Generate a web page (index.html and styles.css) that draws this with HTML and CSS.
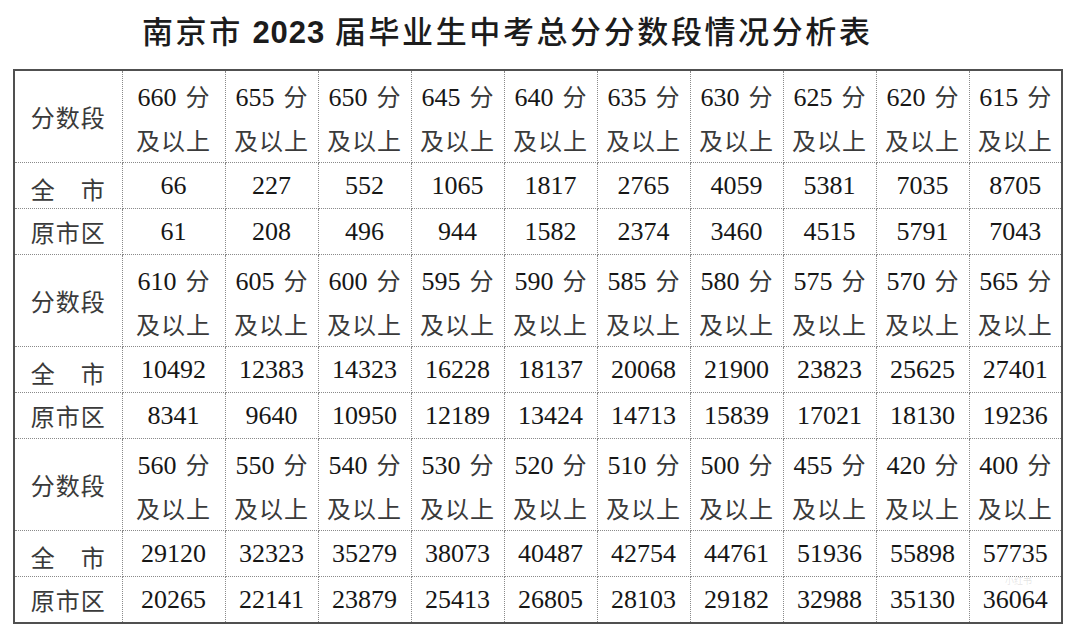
FILE: index.html
```html
<!DOCTYPE html>
<html lang="zh-CN">
<head>
<meta charset="utf-8">
<title>南京市2023届毕业生中考总分分数段情况分析表</title>
<link rel="stylesheet" href="styles.css">
</head>
<body>
<div class="page">
  <h1 class="title">南京市 <span class="num">2023</span> 届毕业生中考总分分数段情况分析表</h1>
  <table class="scores">
    <colgroup>
      <col class="c-label"><col class="c-first"><col class="c-n"><col class="c-n"><col class="c-n"><col class="c-n"><col class="c-n"><col class="c-n"><col class="c-n"><col class="c-n"><col class="c-n">
    </colgroup>
    <tbody>
      <tr class="head">
        <th class="label">分数段</th>
        <td><span class="l1">660<span class="u">分</span></span><span class="l2">及以上</span></td>
        <td><span class="l1">655<span class="u">分</span></span><span class="l2">及以上</span></td>
        <td><span class="l1">650<span class="u">分</span></span><span class="l2">及以上</span></td>
        <td><span class="l1">645<span class="u">分</span></span><span class="l2">及以上</span></td>
        <td><span class="l1">640<span class="u">分</span></span><span class="l2">及以上</span></td>
        <td><span class="l1">635<span class="u">分</span></span><span class="l2">及以上</span></td>
        <td><span class="l1">630<span class="u">分</span></span><span class="l2">及以上</span></td>
        <td><span class="l1">625<span class="u">分</span></span><span class="l2">及以上</span></td>
        <td><span class="l1">620<span class="u">分</span></span><span class="l2">及以上</span></td>
        <td><span class="l1">615<span class="u">分</span></span><span class="l2">及以上</span></td>
      </tr>
      <tr class="data">
        <th class="label"><span class="spread"><span>全</span><span>市</span></span></th>
        <td>66</td><td>227</td><td>552</td><td>1065</td><td>1817</td><td>2765</td><td>4059</td><td>5381</td><td>7035</td><td>8705</td>
      </tr>
      <tr class="data">
        <th class="label">原市区</th>
        <td>61</td><td>208</td><td>496</td><td>944</td><td>1582</td><td>2374</td><td>3460</td><td>4515</td><td>5791</td><td>7043</td>
      </tr>
      <tr class="head">
        <th class="label">分数段</th>
        <td><span class="l1">610<span class="u">分</span></span><span class="l2">及以上</span></td>
        <td><span class="l1">605<span class="u">分</span></span><span class="l2">及以上</span></td>
        <td><span class="l1">600<span class="u">分</span></span><span class="l2">及以上</span></td>
        <td><span class="l1">595<span class="u">分</span></span><span class="l2">及以上</span></td>
        <td><span class="l1">590<span class="u">分</span></span><span class="l2">及以上</span></td>
        <td><span class="l1">585<span class="u">分</span></span><span class="l2">及以上</span></td>
        <td><span class="l1">580<span class="u">分</span></span><span class="l2">及以上</span></td>
        <td><span class="l1">575<span class="u">分</span></span><span class="l2">及以上</span></td>
        <td><span class="l1">570<span class="u">分</span></span><span class="l2">及以上</span></td>
        <td><span class="l1">565<span class="u">分</span></span><span class="l2">及以上</span></td>
      </tr>
      <tr class="data">
        <th class="label"><span class="spread"><span>全</span><span>市</span></span></th>
        <td>10492</td><td>12383</td><td>14323</td><td>16228</td><td>18137</td><td>20068</td><td>21900</td><td>23823</td><td>25625</td><td>27401</td>
      </tr>
      <tr class="data">
        <th class="label">原市区</th>
        <td>8341</td><td>9640</td><td>10950</td><td>12189</td><td>13424</td><td>14713</td><td>15839</td><td>17021</td><td>18130</td><td>19236</td>
      </tr>
      <tr class="head">
        <th class="label">分数段</th>
        <td><span class="l1">560<span class="u">分</span></span><span class="l2">及以上</span></td>
        <td><span class="l1">550<span class="u">分</span></span><span class="l2">及以上</span></td>
        <td><span class="l1">540<span class="u">分</span></span><span class="l2">及以上</span></td>
        <td><span class="l1">530<span class="u">分</span></span><span class="l2">及以上</span></td>
        <td><span class="l1">520<span class="u">分</span></span><span class="l2">及以上</span></td>
        <td><span class="l1">510<span class="u">分</span></span><span class="l2">及以上</span></td>
        <td><span class="l1">500<span class="u">分</span></span><span class="l2">及以上</span></td>
        <td><span class="l1">455<span class="u">分</span></span><span class="l2">及以上</span></td>
        <td><span class="l1">420<span class="u">分</span></span><span class="l2">及以上</span></td>
        <td><span class="l1">400<span class="u">分</span></span><span class="l2">及以上</span></td>
      </tr>
      <tr class="data">
        <th class="label"><span class="spread"><span>全</span><span>市</span></span></th>
        <td>29120</td><td>32323</td><td>35279</td><td>38073</td><td>40487</td><td>42754</td><td>44761</td><td>51936</td><td>55898</td><td>57735</td>
      </tr>
      <tr class="data">
        <th class="label">原市区</th>
        <td>20265</td><td>22141</td><td>23879</td><td>25413</td><td>26805</td><td>28103</td><td>29182</td><td>32988</td><td>35130</td><td>36064</td>
      </tr>
    </tbody>
  </table>
  <div class="watermark">小红书</div>
</div>
</body>
</html>
```

FILE: styles.css
```css
html, body {
  margin: 0;
  padding: 0;
  background: #ffffff;
}

.page {
  position: relative;
  width: 1080px;
  height: 638px;
  overflow: hidden;
  font-family: "Liberation Serif", "Noto Sans CJK SC", serif;
  color: #1a1a1a;
}

.title {
  margin: 0;
  height: 69px;
  box-sizing: border-box;
  padding: 12px 0 0 142px;
  font-family: "Noto Sans CJK SC", sans-serif;
  font-size: 31px;
  line-height: 36px;
  letter-spacing: 2.6px;
  font-weight: 500;
  color: #1c1c1c;
  white-space: nowrap;
}

.title .num {
  font-family: "Liberation Sans", sans-serif;
  font-weight: 700;
  font-size: 31px;
  letter-spacing: 1px;
}

.scores {
  margin-left: 13px;
  border-collapse: collapse;
  table-layout: fixed;
  width: 1050px;
  border: 2px solid #505050;
}

.c-label { width: 108px; }
.c-first { width: 103px; }
.c-n { width: 93px; }

.scores th,
.scores td {
  border: 1px dotted #8a8a8a;
  padding: 0;
  text-align: center;
  vertical-align: middle;
  font-weight: normal;
  overflow: hidden;
}

.head th,
.head td { height: 91px; }

.data th,
.data td {
  height: 45px;
  line-height: 45px;
}

.scores td {
  font-size: 26px;
  color: #161616;
}

.head td { line-height: 1; }

.label {
  font-family: "Noto Sans CJK SC", sans-serif;
  font-size: 24px;
  letter-spacing: 1px;
  color: #3a3a3a;
  padding-left: 4px;
  padding-right: 8px;
}

.spread {
  display: inline-flex;
  justify-content: space-between;
  width: 75px;
  line-height: 30px;
  vertical-align: middle;
}

.l1,
.l2 {
  display: block;
  height: 44px;
  line-height: 44px;
  white-space: nowrap;
}

.l1 { margin-top: 2px; }

.u {
  font-family: "Noto Sans CJK SC", sans-serif;
  font-size: 24px;
  color: #3a3a3a;
  margin-left: 9px;
}

.l2 {
  font-family: "Noto Sans CJK SC", sans-serif;
  font-size: 24px;
  letter-spacing: 1px;
  color: #3a3a3a;
}

.watermark {
  position: absolute;
  right: 48px;
  top: 576px;
  font-family: "Noto Sans CJK SC", sans-serif;
  font-size: 9px;
  line-height: 10px;
  color: rgba(120, 120, 120, 0.2);
  pointer-events: none;
}
```
